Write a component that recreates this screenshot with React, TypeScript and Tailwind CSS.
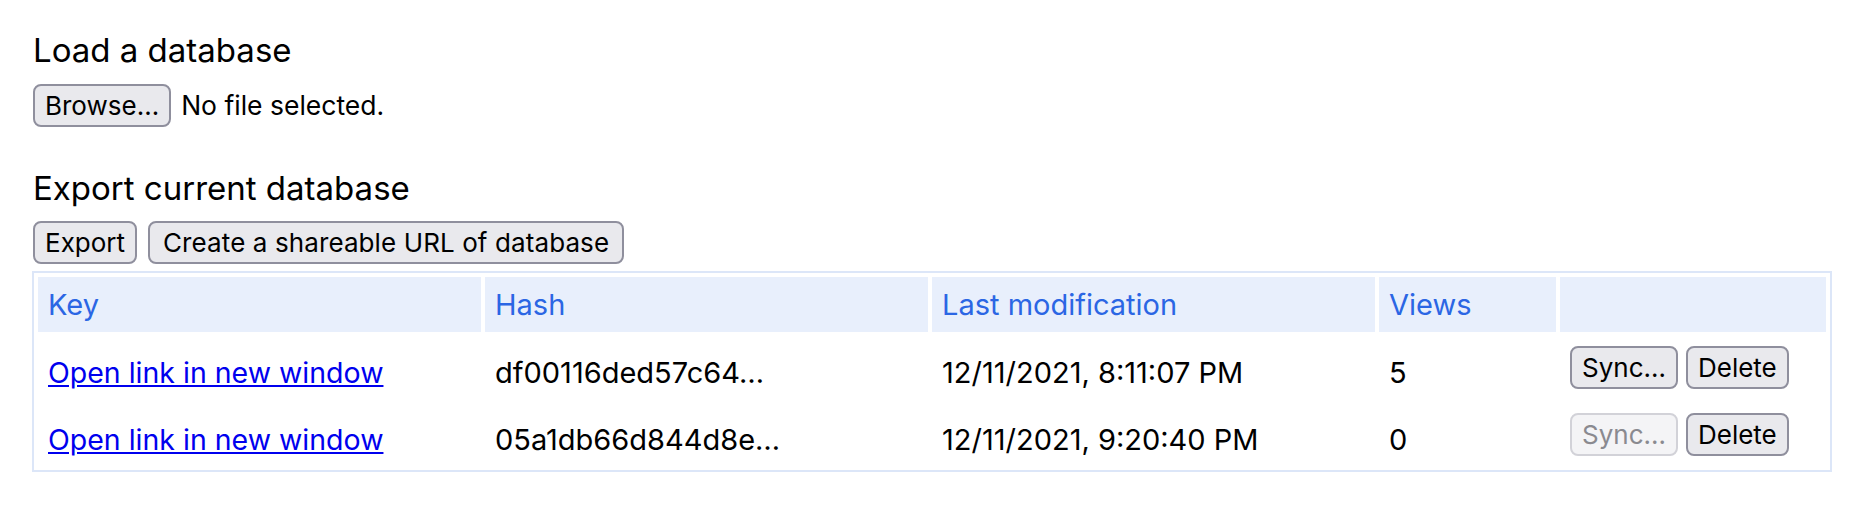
const rows = [
  { hash: "df00116ded57c64…", date: "12/11/2021, 8:11:07 PM", views: "5", canSync: true },
  { hash: "05a1db66d844d8e…", date: "12/11/2021, 9:20:40 PM", views: "0", canSync: false },
];

const Btn = ({
  children,
  disabled,
  wide,
}: {
  children: React.ReactNode;
  disabled?: boolean;
  wide?: boolean;
}) => (
  <button
    disabled={disabled}
    className={`h-[43px] ${wide ? "px-[13px] tracking-[0.1px]" : "px-[10px]"} rounded-[8px] border-2 text-[26px] leading-none ${
      disabled
        ? "bg-[#f4f4f6] border-[#d2d2d8] text-[#8a8a90]"
        : "bg-[#e9e9ed] border-[#8f8f9d] text-black"
    }`}
  >
    {children}
  </button>
);

export default function App() {
  return (
    <div className="min-h-screen bg-white pl-[32px] pt-[30px] font-['Inter',sans-serif] text-black">
      <h3 className="pl-[1px] text-[33px] leading-[40px]">Load a database</h3>
      <div className="mt-[14px] flex items-center gap-[10px] pl-[1px]">
        <Btn>Browse…</Btn>
        <span className="text-[26.5px]">No file selected.</span>
      </div>

      <h3 className="mt-[41px] pl-[1px] text-[33px] leading-[40px]">Export current database</h3>
      <div className="mt-[13px] flex gap-[11px] pl-[1px]">
        <Btn>Export</Btn>
        <Btn wide>Create a shareable URL of database</Btn>
      </div>

      <table className="mt-[7px] w-[1800px] table-fixed border-separate border-spacing-[4px] border-2 border-[#dce6f8] text-[29px]">
        <colgroup>
          <col className="w-[443px]" />
          <col className="w-[443px]" />
          <col className="w-[443px]" />
          <col className="w-[177px]" />
          <col className="w-[266px]" />
        </colgroup>
        <thead>
          <tr className="h-[55px] bg-[#e8effc] text-left text-[#2b66e4]">
            <th className="px-[10px] font-normal">Key</th>
            <th className="px-[10px] font-normal">Hash</th>
            <th className="px-[10px] font-normal">Last modification</th>
            <th className="px-[10px] font-normal">Views</th>
            <th className="px-[10px] font-normal"></th>
          </tr>
        </thead>
        <tbody>
          {rows.map((r) => (
            <tr key={r.hash} className="h-[63px]">
              <td className="px-[10px] pt-[10px]">
                <a href="#" className="text-[28.5px] text-[#0000ee] underline">
                  Open link in new window
                </a>
              </td>
              <td className="px-[10px] pt-[10px]">{r.hash}</td>
              <td className="px-[10px] pt-[10px]">{r.date}</td>
              <td className="px-[10px] pt-[10px]">{r.views}</td>
              <td className="px-[10px]">
                <div className="flex gap-[8px]">
                  <Btn disabled={!r.canSync}>Sync…</Btn>
                  <Btn>Delete</Btn>
                </div>
              </td>
            </tr>
          ))}
        </tbody>
      </table>
    </div>
  );
}
